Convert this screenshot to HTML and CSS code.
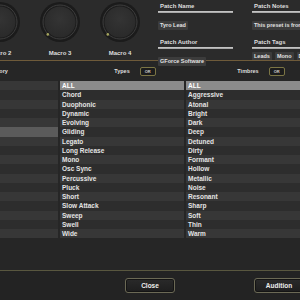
FILE: index.html
```html
<!DOCTYPE html>
<html lang="en">
<head>
  <meta charset="UTF-8">
  <title>Patch Browser</title>
  <link rel="stylesheet" href="styles.css">
</head>
<body>
  <div class="plugin">
    <div class="top">
      <div class="macros">
        <div class="macro">
          <svg class="knob" width="44" height="44" viewBox="0 0 44 44">
            <circle cx="22" cy="22" r="20" fill="#1b1b1b"/>
            <circle cx="22" cy="22" r="17" fill="none" stroke="#3e3e3e" stroke-width="1"/>
            <circle cx="22" cy="22" r="15.5" fill="url(#face)"/>
            <circle cx="9.8" cy="34.4" r="1.3" fill="#a4a45e"/>
            <defs>
              <radialGradient id="face" cx="50%" cy="40%" r="60%">
                <stop offset="0" stop-color="#343434"/>
                <stop offset="1" stop-color="#2a2a2a"/>
              </radialGradient>
            </defs>
          </svg>
          <span class="macro-label">Macro 2</span>
        </div>
        <div class="macro">
          <svg class="knob" width="44" height="44" viewBox="0 0 44 44">
            <circle cx="22" cy="22" r="20" fill="#1b1b1b"/>
            <circle cx="22" cy="22" r="17" fill="none" stroke="#3e3e3e" stroke-width="1"/>
            <circle cx="22" cy="22" r="15.5" fill="url(#face)"/>
            <circle cx="9.8" cy="34.4" r="1.3" fill="#a4a45e"/>
          </svg>
          <span class="macro-label">Macro 3</span>
        </div>
        <div class="macro">
          <svg class="knob" width="44" height="44" viewBox="0 0 44 44">
            <circle cx="22" cy="22" r="20" fill="#1b1b1b"/>
            <circle cx="22" cy="22" r="17" fill="none" stroke="#3e3e3e" stroke-width="1"/>
            <circle cx="22" cy="22" r="15.5" fill="url(#face)"/>
            <circle cx="9.8" cy="34.4" r="1.3" fill="#a4a45e"/>
          </svg>
          <span class="macro-label">Macro 4</span>
        </div>
      </div>

      <div class="patch">
        <div class="patch-col">
          <div class="field">
            <div class="field-label">Patch Name</div>
            <div class="field-bar"></div>
            <div class="field-value">Tyro Lead</div>
          </div>
          <div class="field">
            <div class="field-label">Patch Author</div>
            <div class="field-bar"></div>
            <div class="field-value">GForce Software</div>
          </div>
        </div>
        <div class="patch-col wide">
          <div class="field">
            <div class="field-label">Patch Notes</div>
            <div class="field-bar"></div>
            <div class="field-value">This preset is from the factory library</div>
          </div>
          <div class="field">
            <div class="field-label">Patch Tags</div>
            <div class="field-bar"></div>
            <div class="tags">
              <span class="field-value">Leads</span>
              <span class="field-value">Mono</span>
              <span class="field-value">Dark</span>
            </div>
          </div>
        </div>
      </div>
    </div>

    <div class="browser">
      <div class="column">
        <div class="col-head"><span class="col-title">Category</span></div>
        <div class="list">
          <div class="row"></div><div class="row"></div><div class="row"></div>
          <div class="row"></div><div class="row"></div><div class="row current"></div>
          <div class="row"></div><div class="row"></div><div class="row"></div>
          <div class="row"></div><div class="row"></div><div class="row"></div>
          <div class="row"></div><div class="row"></div><div class="row"></div>
          <div class="row"></div><div class="row"></div>
        </div>
      </div>
      <div class="column">
        <div class="col-head"><span class="col-title">Types</span><span class="or-btn">OR</span></div>
        <div class="list">
          <div class="row selected">ALL</div>
          <div class="row">Chord</div>
          <div class="row">Duophonic</div>
          <div class="row">Dynamic</div>
          <div class="row">Evolving</div>
          <div class="row">Gliding</div>
          <div class="row">Legato</div>
          <div class="row">Long Release</div>
          <div class="row">Mono</div>
          <div class="row">Osc Sync</div>
          <div class="row">Percussive</div>
          <div class="row">Pluck</div>
          <div class="row">Short</div>
          <div class="row">Slow Attack</div>
          <div class="row">Sweep</div>
          <div class="row">Swell</div>
          <div class="row">Wide</div>
        </div>
      </div>
      <div class="column">
        <div class="col-head"><span class="col-title">Timbres</span><span class="or-btn">OR</span></div>
        <div class="list">
          <div class="row selected">ALL</div>
          <div class="row">Aggressive</div>
          <div class="row">Atonal</div>
          <div class="row">Bright</div>
          <div class="row">Dark</div>
          <div class="row">Deep</div>
          <div class="row">Detuned</div>
          <div class="row">Dirty</div>
          <div class="row">Formant</div>
          <div class="row">Hollow</div>
          <div class="row">Metallic</div>
          <div class="row">Noise</div>
          <div class="row">Resonant</div>
          <div class="row">Sharp</div>
          <div class="row">Soft</div>
          <div class="row">Thin</div>
          <div class="row">Warm</div>
        </div>
      </div>
    </div>

    <div class="footer">
      <button class="btn">Close</button>
      <button class="btn">Audition</button>
    </div>
  </div>
</body>
</html>
```

FILE: styles.css
```css
body {
  margin: 0;
  background: #232323;
  font-family: "Liberation Sans", Arial, sans-serif;
  font-weight: bold;
  color: #dedede;
  overflow: hidden;
}
.plugin {
  width: 300px;
  height: 300px;
  overflow: hidden;
}
.top {
  display: flex;
  height: 60px;
  background: #2b2b2b;
  border-bottom: 1px solid #6f5b3a;
}
.macros {
  display: flex;
  flex-shrink: 0;
  width: 180px;
  margin-left: -30px;
}
.macro {
  width: 60px;
  display: flex;
  flex-direction: column;
  align-items: center;
}
.knob {
  display: block;
}
.macro-label {
  margin-top: 5px;
  font-size: 6px;
  line-height: 8px;
  white-space: nowrap;
}
.patch {
  display: flex;
  flex: 1;
  min-width: 0;
  padding-left: 8px;
}
.patch-col {
  width: 75px;
  flex-shrink: 0;
}
.patch-col.wide {
  width: auto;
  flex: 1;
  min-width: 0;
  margin-left: 19px;
  overflow: hidden;
  white-space: nowrap;
}
.field {
  margin-top: 7px;
}
.field:first-child {
  margin-top: 2px;
}
.field-label {
  padding-left: 2px;
  font-size: 6px;
  line-height: 8px;
  white-space: nowrap;
}
.field-bar {
  height: 2px;
  margin-top: 1px;
  background: linear-gradient(#d0d0d0, #9c9c9c);
}
.field-value {
  display: inline-block;
  margin-top: 3px;
  height: 9px;
  padding: 0 2px;
  background: #3c3c3c;
  border-radius: 1px;
  font-size: 5.5px;
  line-height: 9px;
  color: #e2e2e2;
  white-space: nowrap;
}
.tags {
  display: flex;
  gap: 3px;
}
.browser {
  display: flex;
  gap: 2px;
  height: 209px;
  margin-left: -66px;
  background: #262626;
}
.column {
  width: 124px;
  flex-shrink: 0;
}
.col-head {
  display: grid;
  grid-template-columns: 1fr auto 1fr;
  align-items: center;
  height: 20px;
  font-size: 5.5px;
}
.col-title {
  grid-column: 2;
}
.or-btn {
  grid-column: 3;
  justify-self: start;
  margin-left: 10px;
  width: 14px;
  height: 7px;
  border: 1px solid #7b7545;
  border-radius: 2px;
  background: #1c1c1c;
  font-size: 4px;
  line-height: 7px;
  text-align: center;
  color: #cfcfcf;
}
.row {
  height: 9.25px;
  padding-left: 2px;
  font-size: 6.5px;
  line-height: 9.25px;
  color: #e4e4e4;
  white-space: nowrap;
}
.row:nth-child(odd) {
  background: #373737;
}
.row:nth-child(even) {
  background: #2d2d2d;
}
.row.current {
  background: #5b5b5b;
}
.row.selected {
  background: #8b8b8b;
  color: #ffffff;
}
.footer {
  display: flex;
  gap: 79px;
  height: 29px;
  padding: 7px 0 0 125px;
  box-sizing: border-box;
  border-top: 1px solid #59573f;
  background: #232323;
}
.btn {
  width: 50px;
  height: 15px;
  flex-shrink: 0;
  padding: 0;
  border: 1px solid #6b6955;
  border-radius: 3px;
  background: linear-gradient(#2a2a2a, #1e1e1e);
  box-shadow: inset 0 0 0 1px #141414;
  font-family: "Liberation Sans", Arial, sans-serif;
  font-weight: bold;
  font-size: 6.5px;
  color: #eeeeee;
}
```
